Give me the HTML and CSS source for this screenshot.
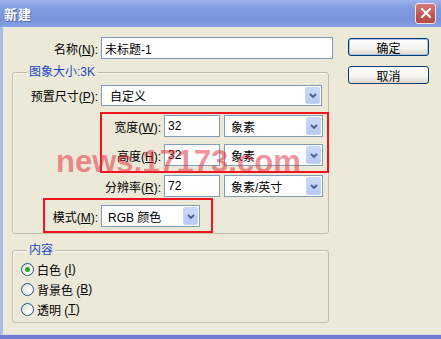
FILE: index.html
```html
<!DOCTYPE html>
<html>
<head>
<meta charset="utf-8">
<title>新建</title>
<link rel="stylesheet" href="styles.css">
</head>
<body>
<div class="window">
  <div class="titlebar">
    <span class="title">新建</span>
    <span class="close"><svg width="12" height="12" viewBox="0 0 12 12"><path d="M2 2 L10 10 M10 2 L2 10" stroke="#fff" stroke-width="2.2" stroke-linecap="round"/></svg></span>
  </div>

  <div class="client">
    <div class="main">
      <div class="row name-row">
        <label class="lbl w-name">名称(<u>N</u>):</label>
        <input class="field f-name" value="未标题-1">
      </div>

      <div class="group g-size">
        <div class="legend">图象大小:3K</div>

        <div class="row preset-row">
          <label class="lbl w-preset">预置尺寸(<u>P</u>):</label>
          <div class="combo c-preset"><span class="val">自定义</span><span class="drop"><svg width="8" height="5" viewBox="0 0 8 5"><path d="M1 1 L4 4 L7 1" fill="none" stroke="#4a5f8c" stroke-width="1.8"/></svg></span></div>
        </div>

        <div class="mark dims">
          <div class="row">
            <label class="lbl w-dim">宽度(<u>W</u>):</label>
            <input class="field f-num" value="32">
            <div class="combo c-unit"><span class="val">象素</span><span class="drop"><svg width="8" height="5" viewBox="0 0 8 5"><path d="M1 1 L4 4 L7 1" fill="none" stroke="#4a5f8c" stroke-width="1.8"/></svg></span></div>
          </div>
          <div class="row r-second">
            <label class="lbl w-dim">高度(<u>H</u>):</label>
            <input class="field f-num" value="32">
            <div class="combo c-unit"><span class="val">象素</span><span class="drop"><svg width="8" height="5" viewBox="0 0 8 5"><path d="M1 1 L4 4 L7 1" fill="none" stroke="#4a5f8c" stroke-width="1.8"/></svg></span></div>
          </div>
        </div>

        <div class="row res-row">
          <label class="lbl w-res">分辨率(<u>R</u>):</label>
          <input class="field f-num" value="72">
          <div class="combo c-unit"><span class="val">象素/英寸</span><span class="drop"><svg width="8" height="5" viewBox="0 0 8 5"><path d="M1 1 L4 4 L7 1" fill="none" stroke="#4a5f8c" stroke-width="1.8"/></svg></span></div>
        </div>

        <div class="mark mode">
          <div class="row">
            <label class="lbl w-mode">模式(<u>M</u>):</label>
            <div class="combo c-mode"><span class="val">RGB 颜色</span><span class="drop"><svg width="8" height="5" viewBox="0 0 8 5"><path d="M1 1 L4 4 L7 1" fill="none" stroke="#4a5f8c" stroke-width="1.8"/></svg></span></div>
          </div>
        </div>
      </div>

      <div class="group g-content">
        <div class="legend">内容</div>
        <div class="radios">
          <div class="radio"><span class="dot on"></span>白色 (<u>I</u>)</div>
          <div class="radio"><span class="dot"></span>背景色 (<u>B</u>)</div>
          <div class="radio"><span class="dot"></span>透明 (<u>T</u>)</div>
        </div>
      </div>
    </div>

    <div class="buttons">
      <div class="btn default">确定</div>
      <div class="btn">取消</div>
    </div>
  </div>

  <div class="watermark">news.17173.com</div>
</div>
</body>
</html>
```

FILE: styles.css
```css
* {
  box-sizing: border-box;
}

body {
  margin: 0;
  background: #ece9d8;
  font-family: "Liberation Sans", "Noto Sans CJK SC", sans-serif;
  font-size: 12px;
  color: #000;
}

.window {
  position: relative;
  width: 441px;
  height: 339px;
  display: flex;
  flex-direction: column;
  background: #ece9d8;
  border-bottom: 4px solid #6f7ad0;
  overflow: hidden;
}

/* title bar */
.titlebar {
  height: 27px;
  flex: none;
  display: flex;
  align-items: center;
  justify-content: space-between;
  padding: 0 5px 0 4px;
  background: linear-gradient(to bottom, #9ab1ea 0%, #7e9ae0 35%, #7895dc 75%, #87a1e3 100%);
}

.title {
  color: #fff;
  font-family: "Noto Sans CJK SC", sans-serif;
  font-weight: bold;
  font-size: 13px;
  letter-spacing: 1px;
  text-shadow: 1px 1px 0 #5a6fae;
}

.close {
  width: 21px;
  height: 21px;
  margin-top: -1px;
  display: flex;
  align-items: center;
  justify-content: center;
  border: 1px solid #f1e4e8;
  border-radius: 3px;
  background: linear-gradient(to bottom, #d67a78, #c0554f 60%, #b64a46);
}

/* client area */
.client {
  flex: 1;
  display: flex;
  border-left: 3px solid #a9bbe8;
  border-bottom: 1px solid #d9d8e6;
}

.main {
  width: 330px;
  flex: none;
}

.row {
  display: flex;
  align-items: center;
  height: 22px;
}

.lbl {
  flex: none;
  text-align: right;
  margin-right: 3px;
  white-space: nowrap;
}

.w-name { width: 95px; }
.w-preset { width: 85px; }
.w-dim { width: 59px; }
.w-res { width: 148px; }
.w-mode { width: 53px; }

.name-row {
  margin-top: 10px;
}

.field {
  height: 22px;
  border: 1px solid #7f9db9;
  background: #fff;
  padding: 0 3px;
  font: inherit;
  color: #000;
  outline: none;
}

.f-name { width: 232px; }
.f-num { width: 56px; margin-right: 4px; }

.combo {
  height: 22px;
  display: flex;
  align-items: center;
  border: 1px solid #7f9db9;
  background: #fff;
  flex: none;
}

.combo .val {
  padding-left: 6px;
  white-space: nowrap;
}

.combo .drop {
  margin-left: auto;
  margin-right: 1px;
  width: 15px;
  height: 18px;
  display: flex;
  align-items: center;
  justify-content: center;
  border: 1px solid #c6d4f6;
  border-radius: 2px;
  background: linear-gradient(to bottom, #ccdaf9, #b7c9f3);
}

.c-preset { width: 221px; height: 21px; }
.c-preset .val { padding-left: 8px; }
.c-preset .drop { height: 17px; }
.c-unit { width: 99px; }
.c-mode { width: 99px; }

/* group boxes */
.group {
  margin-left: 9px;
  width: 317px;
  border: 1px solid #c2bda9;
  border-radius: 3px;
  box-shadow: inset 1px 1px 0 #f8f7f0;
}

.legend {
  display: table;
  margin: -8px 0 0 14px;
  padding: 0 2px;
  height: 14px;
  line-height: 14px;
  background: #ece9d8;
  color: #1846c4;
}

.g-size {
  margin-top: 13px;
  height: 162px;
}

.preset-row {
  margin-top: 6px;
  height: 21px;
}

.mark {
  border: 2px solid #f0141e;
}

.dims {
  margin: 6px 0 0 87px;
  width: 229px;
  height: 61px;
  padding-top: 1px;
}

.r-second {
  margin-top: 7px;
}

.res-row {
  margin-top: 2px;
}

.mode {
  margin: 1px 0 0 30px;
  width: 170px;
  height: 35px;
  padding-top: 5px;
}

.g-content {
  margin-top: 16px;
  height: 73px;
}

.radios {
  margin-top: 2px;
}

.radio {
  height: 20px;
  display: flex;
  align-items: center;
  padding-left: 8px;
  white-space: nowrap;
}

.dot {
  width: 13px;
  height: 13px;
  margin-right: 3px;
  border: 1px solid #1d5281;
  border-radius: 50%;
  background: linear-gradient(135deg, #dcdad0, #fff 70%);
  display: flex;
  align-items: center;
  justify-content: center;
}

.dot.on::after {
  content: "";
  width: 5px;
  height: 5px;
  border-radius: 50%;
  background: #2fa22c;
}

/* buttons */
.buttons {
  margin-left: 15px;
  padding-top: 11px;
}

.btn {
  width: 81px;
  height: 18px;
  margin-bottom: 10px;
  border: 1px solid #003c74;
  border-radius: 3px;
  background: linear-gradient(to bottom, #fff, #f4f3ee 60%, #dcd8cc);
  display: flex;
  align-items: center;
  justify-content: center;
  font-family: "Noto Sans CJK SC", sans-serif;
}

.btn.default {
  box-shadow: inset 0 0 0 1px #a8c0ee;
}

/* watermark over the form */
.watermark {
  position: absolute;
  left: 56px;
  top: 146px;
  font-family: "Liberation Sans", sans-serif;
  font-weight: bold;
  font-size: 31px;
  line-height: 31px;
  color: rgba(224, 40, 56, 0.5);
  white-space: nowrap;
}
```
